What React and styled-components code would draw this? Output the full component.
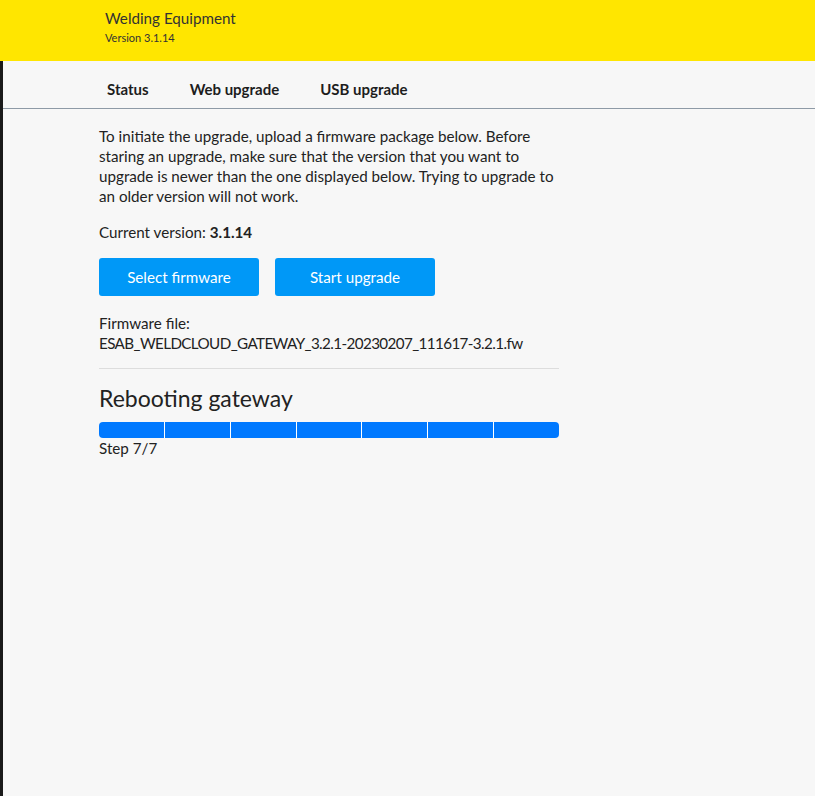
import React from "react";
import styled, { createGlobalStyle } from "styled-components";

const Global = createGlobalStyle`
  html, body { margin: 0; padding: 0; height: 100%; }
  body { background: #f7f7f7; font-family: Lato, "Liberation Sans", sans-serif; color: #222; }
  #root { min-height: 100%; }
`;

const Page = styled.div`
  min-height: 796px;
  display: flex;
  flex-direction: column;
`;

const Header = styled.header`
  height: 61px;
  background: #ffe600;
  box-sizing: border-box;
  padding: 8px 0 0 105px;
  display: flex;
  flex-direction: column;
`;

const Title = styled.div`
  font-size: 15.2px;
  color: #333;
  line-height: 20px;
`;

const Version = styled.div`
  font-size: 11px;
  color: #333;
  margin-top: 2px;
  line-height: 16px;
`;

const Body = styled.div`
  flex: 1;
  border-left: 3px solid #1a1a1a;
  background: #f7f7f7;
`;

const Tabs = styled.nav`
  height: 48px;
  border-bottom: 1px solid #8e9aa6;
  display: flex;
  align-items: center;
  padding-left: 104px;
  gap: 41px;
  box-sizing: border-box;
`;

const Tab = styled.div`
  font-size: 15px;
  font-weight: 700;
  color: #1d1d1d;
  padding-top: 9px;
`;

const Content = styled.main`
  width: 460px;
  margin-left: 96px;
  padding-top: 17px;
  font-size: 15.2px;
  line-height: 20px;
  color: #222;
`;

const Para = styled.p`
  margin: 0 0 16px;
`;

const Buttons = styled.div`
  display: flex;
  gap: 16px;
  margin-top: 16px;
`;

const Button = styled.button`
  width: 160px;
  height: 38px;
  background: #0098f7;
  color: #fff;
  border: none;
  border-radius: 3px;
  font-family: inherit;
  font-size: 15.2px;
`;

const FileInfo = styled.div`
  margin-top: 17px;
`;

const FileName = styled.span`
  letter-spacing: -0.6px;
`;

const Divider = styled.hr`
  border: none;
  border-top: 1px solid #ddd;
  margin: 15px 0 0;
`;

const Heading = styled.h2`
  font-size: 23px;
  font-weight: 400;
  margin: 14px 0 0;
  line-height: 30px;
  color: #222;
`;

const Bar = styled.div`
  margin-top: 9px;
  height: 16px;
  border-radius: 4px;
  overflow: hidden;
  display: grid;
  grid-template-columns: repeat(${(p) => p.$steps}, 1fr);
  gap: 1px;
  background: #fff;
`;

const Segment = styled.div`
  background: ${(p) => (p.$done ? "#0079ff" : "#dbe2ea")};
`;

const StepLabel = styled.div`
  margin-top: 0;
`;

export default function App() {
  const steps = 7;
  return (
    <Page>
      <Global />
      <Header>
        <Title>Welding Equipment</Title>
        <Version>Version 3.1.14</Version>
      </Header>
      <Body>
        <Tabs>
          <Tab>Status</Tab>
          <Tab>Web upgrade</Tab>
          <Tab>USB upgrade</Tab>
        </Tabs>
        <Content>
          <Para>
            To initiate the upgrade, upload a firmware package below. Before
            staring an upgrade, make sure that the version that you want to
            upgrade is newer than the one displayed below. Trying to upgrade to
            an older version will not work.
          </Para>
          <div>
            Current version: <b>3.1.14</b>
          </div>
          <Buttons>
            <Button>Select firmware</Button>
            <Button>Start upgrade</Button>
          </Buttons>
          <FileInfo>
            Firmware file:
            <br />
            <FileName>ESAB_WELDCLOUD_GATEWAY_3.2.1-20230207_111617-3.2.1.fw</FileName>
          </FileInfo>
          <Divider />
          <Heading>Rebooting gateway</Heading>
          <Bar $steps={steps}>
            {Array.from({ length: steps }).map((_, i) => (
              <Segment key={i} $done={i < 7} />
            ))}
          </Bar>
          <StepLabel>Step 7/7</StepLabel>
        </Content>
      </Body>
    </Page>
  );
}
